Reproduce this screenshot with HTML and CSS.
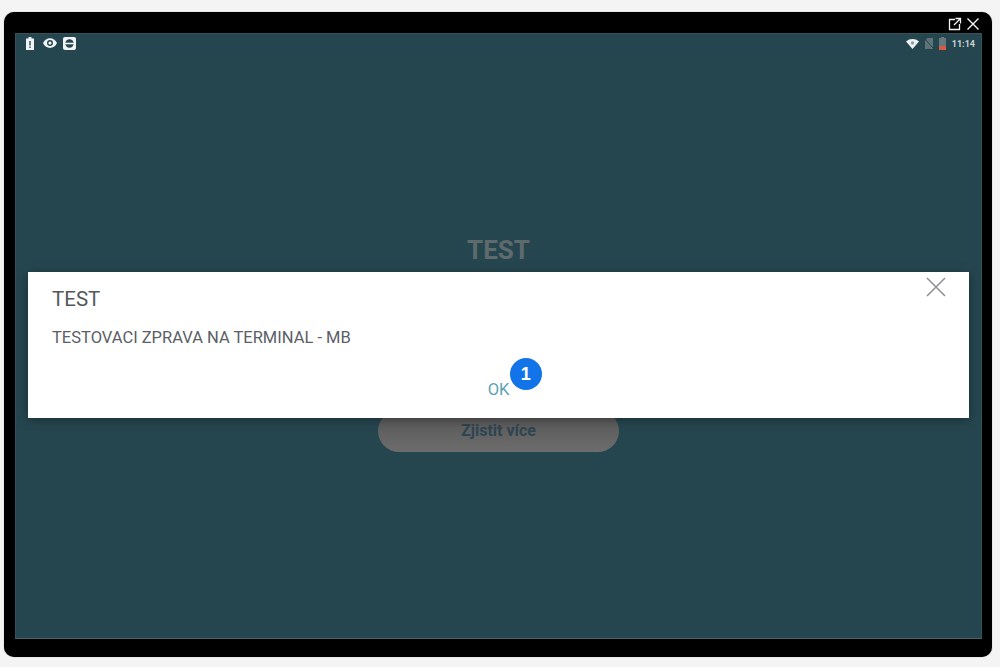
FILE: index.html
```html
<!DOCTYPE html>
<html lang="cs">
<head>
<meta charset="utf-8">
<title>TEST</title>
<link rel="stylesheet" href="styles.css">
</head>
<body>
<div class="device">
  <div class="device-bar">
    <svg class="tool" width="14" height="14" viewBox="0 0 14 14"><path d="M7 2.500H1.500v10h10V7M7.500 1.500h5v5M12 2L6 8" fill="none" stroke="#f2f2f2" stroke-width="1.300"/></svg>
    <svg class="tool" width="14" height="14" viewBox="0 0 14 14"><path d="M1.500 1.500l11 11M12.500 1.500l-11 11" fill="none" stroke="#f7f7f7" stroke-width="1.400"/></svg>
  </div>
  <div class="screen">
    <div class="status">
      <div class="status-group">
        <svg width="8" height="13" viewBox="0 0 8 13"><path d="M2.500 0h3v1.500H8V13H0V1.500h2.500z" fill="#f1f4f4"/><path d="M3.300 4h1.400v4.500H3.300zM3.300 9.500h1.400V11H3.300z" fill="#26464f"/></svg>
        <svg class="eye" width="14" height="10" viewBox="0 0 14 10"><path d="M0 5c3-6.500 11-6.500 14 0-3 6.500-11 6.500-14 0z" fill="#f1f4f4"/><circle cx="7" cy="5" r="3" fill="#26464f"/><circle cx="7" cy="5" r="1.600" fill="#f1f4f4"/></svg>
        <svg width="13" height="13" viewBox="0 0 13 13"><rect width="13" height="13" rx="2" fill="#f1f4f4"/><circle cx="6.500" cy="6.500" r="4.200" fill="#26464f"/><rect x="1" y="5.700" width="11" height="1.600" fill="#f1f4f4"/></svg>
      </div>
      <div class="status-group status-right">
        <svg width="13" height="10" viewBox="0 0 13 10"><path d="M0 2.500C3.500-.8 9.500-.8 13 2.500L6.500 10z" fill="#eef2f2"/><circle cx="6.500" cy="4" r="1.700" fill="#8ca0a4"/></svg>
        <svg width="8" height="11" viewBox="0 0 8 11"><path d="M2.500 0H8v11H0V2.500z" fill="#5d7378"/><path d="M0 1l8 9" stroke="#26464f" stroke-width="1"/></svg>
        <svg width="7" height="13" viewBox="0 0 7 13"><rect y="1" width="7" height="8" fill="#65797d"/><rect x="2" width="3" height="1" fill="#65797d"/><rect y="9" width="7" height="4" fill="#d65a46"/></svg>
        <span class="clock">11:14</span>
      </div>
    </div>
    <div class="content">
      <h1 class="headline">TEST</h1>
      <div class="cta">Zjistit více</div>
    </div>
    <div class="dialog">
      <svg class="dialog-close" width="20" height="20" viewBox="0 0 20 20"><path d="M1 1l18 18M19 1L1 19" fill="none" stroke="#8b8f92" stroke-width="1.500"/></svg>
      <h2 class="dialog-title">TEST</h2>
      <p class="dialog-text">TESTOVACI ZPRAVA NA TERMINAL - MB</p>
      <div class="dialog-actions">
        <span class="dialog-ok">OK<span class="badge">1</span></span>
      </div>
    </div>
  </div>
</div>
</body>
</html>
```
FILE: styles.css
```css
* { box-sizing: border-box; }
html, body { margin: 0; height: 100%; }
body {
  background: #f4f4f4;
  padding: 12px 8px 10px 4px;
  font-family: Roboto, "Liberation Sans", sans-serif;
  overflow: hidden;
}
.device {
  height: 645px;
  background: #000;
  border-radius: 10px;
  padding: 0 10px 18px 11px;
  display: flex;
  flex-direction: column;
  box-shadow: 0 0 1px #777;
}
.device-bar {
  height: 21px;
  flex: none;
  display: flex;
  justify-content: flex-end;
  align-items: center;
  gap: 4px;
  padding: 3px 2px 0 0;
}
.tool { display: block; }
.screen {
  flex: 1;
  position: relative;
  background: #26464f;
  border: 1px solid #35525a;
  border-bottom-color: #4a646b;
  display: flex;
  flex-direction: column;
}
.status {
  height: 18px;
  flex: none;
  display: flex;
  justify-content: space-between;
  align-items: center;
  padding: 0 6px 0 10px;
}
.status-group { display: flex; align-items: center; gap: 9px; }
.eye { margin-right: -3px; }
.status-right { gap: 6px; padding-top: 1px; }
.clock { font-size: 9px; font-weight: 700; color: #c9d3d5; }
.content {
  flex: 1;
  display: flex;
  flex-direction: column;
  align-items: center;
  padding-top: 182px;
}
.headline {
  margin: 0;
  font-size: 26px;
  line-height: 32px;
  font-weight: 700;
  color: #5f6a6d;
}
.cta {
  margin-top: 144px;
  width: 241px;
  height: 42px;
  border-radius: 21px;
  background: linear-gradient(#565656, #6c6c6c);
  color: #2e4552;
  font-size: 16px;
  font-weight: 700;
  display: flex;
  align-items: center;
  justify-content: center;
  padding-bottom: 2px;
}
.dialog {
  position: absolute;
  left: 12px;
  top: 238px;
  width: 941px;
  height: 146px;
  background: #fff;
  padding: 15px 24px 0;
  box-shadow: 0 2px 10px rgba(0, 0, 0, .35);
  display: flex;
  flex-direction: column;
}
.dialog-close { position: absolute; right: 23px; top: 5px; }
.dialog-title {
  margin: 0;
  font-size: 20.5px;
  line-height: 24px;
  font-weight: 400;
  color: #54585c;
}
.dialog-text {
  margin: 17px 0 0;
  font-size: 16.5px;
  line-height: 20px;
  color: #5b6067;
}
.dialog-actions {
  margin-top: 32px;
  display: flex;
  justify-content: center;
}
.dialog-ok {
  position: relative;
  font-size: 16.5px;
  line-height: 20px;
  color: #5aa3b4;
}
.badge {
  position: absolute;
  left: 22px;
  top: -22px;
  width: 32px;
  height: 32px;
  border-radius: 50%;
  background: #1274e8;
  color: #fff;
  font-size: 18px;
  font-weight: 700;
  font-family: "Liberation Sans", sans-serif;
  display: flex;
  align-items: center;
  justify-content: center;
}
```
